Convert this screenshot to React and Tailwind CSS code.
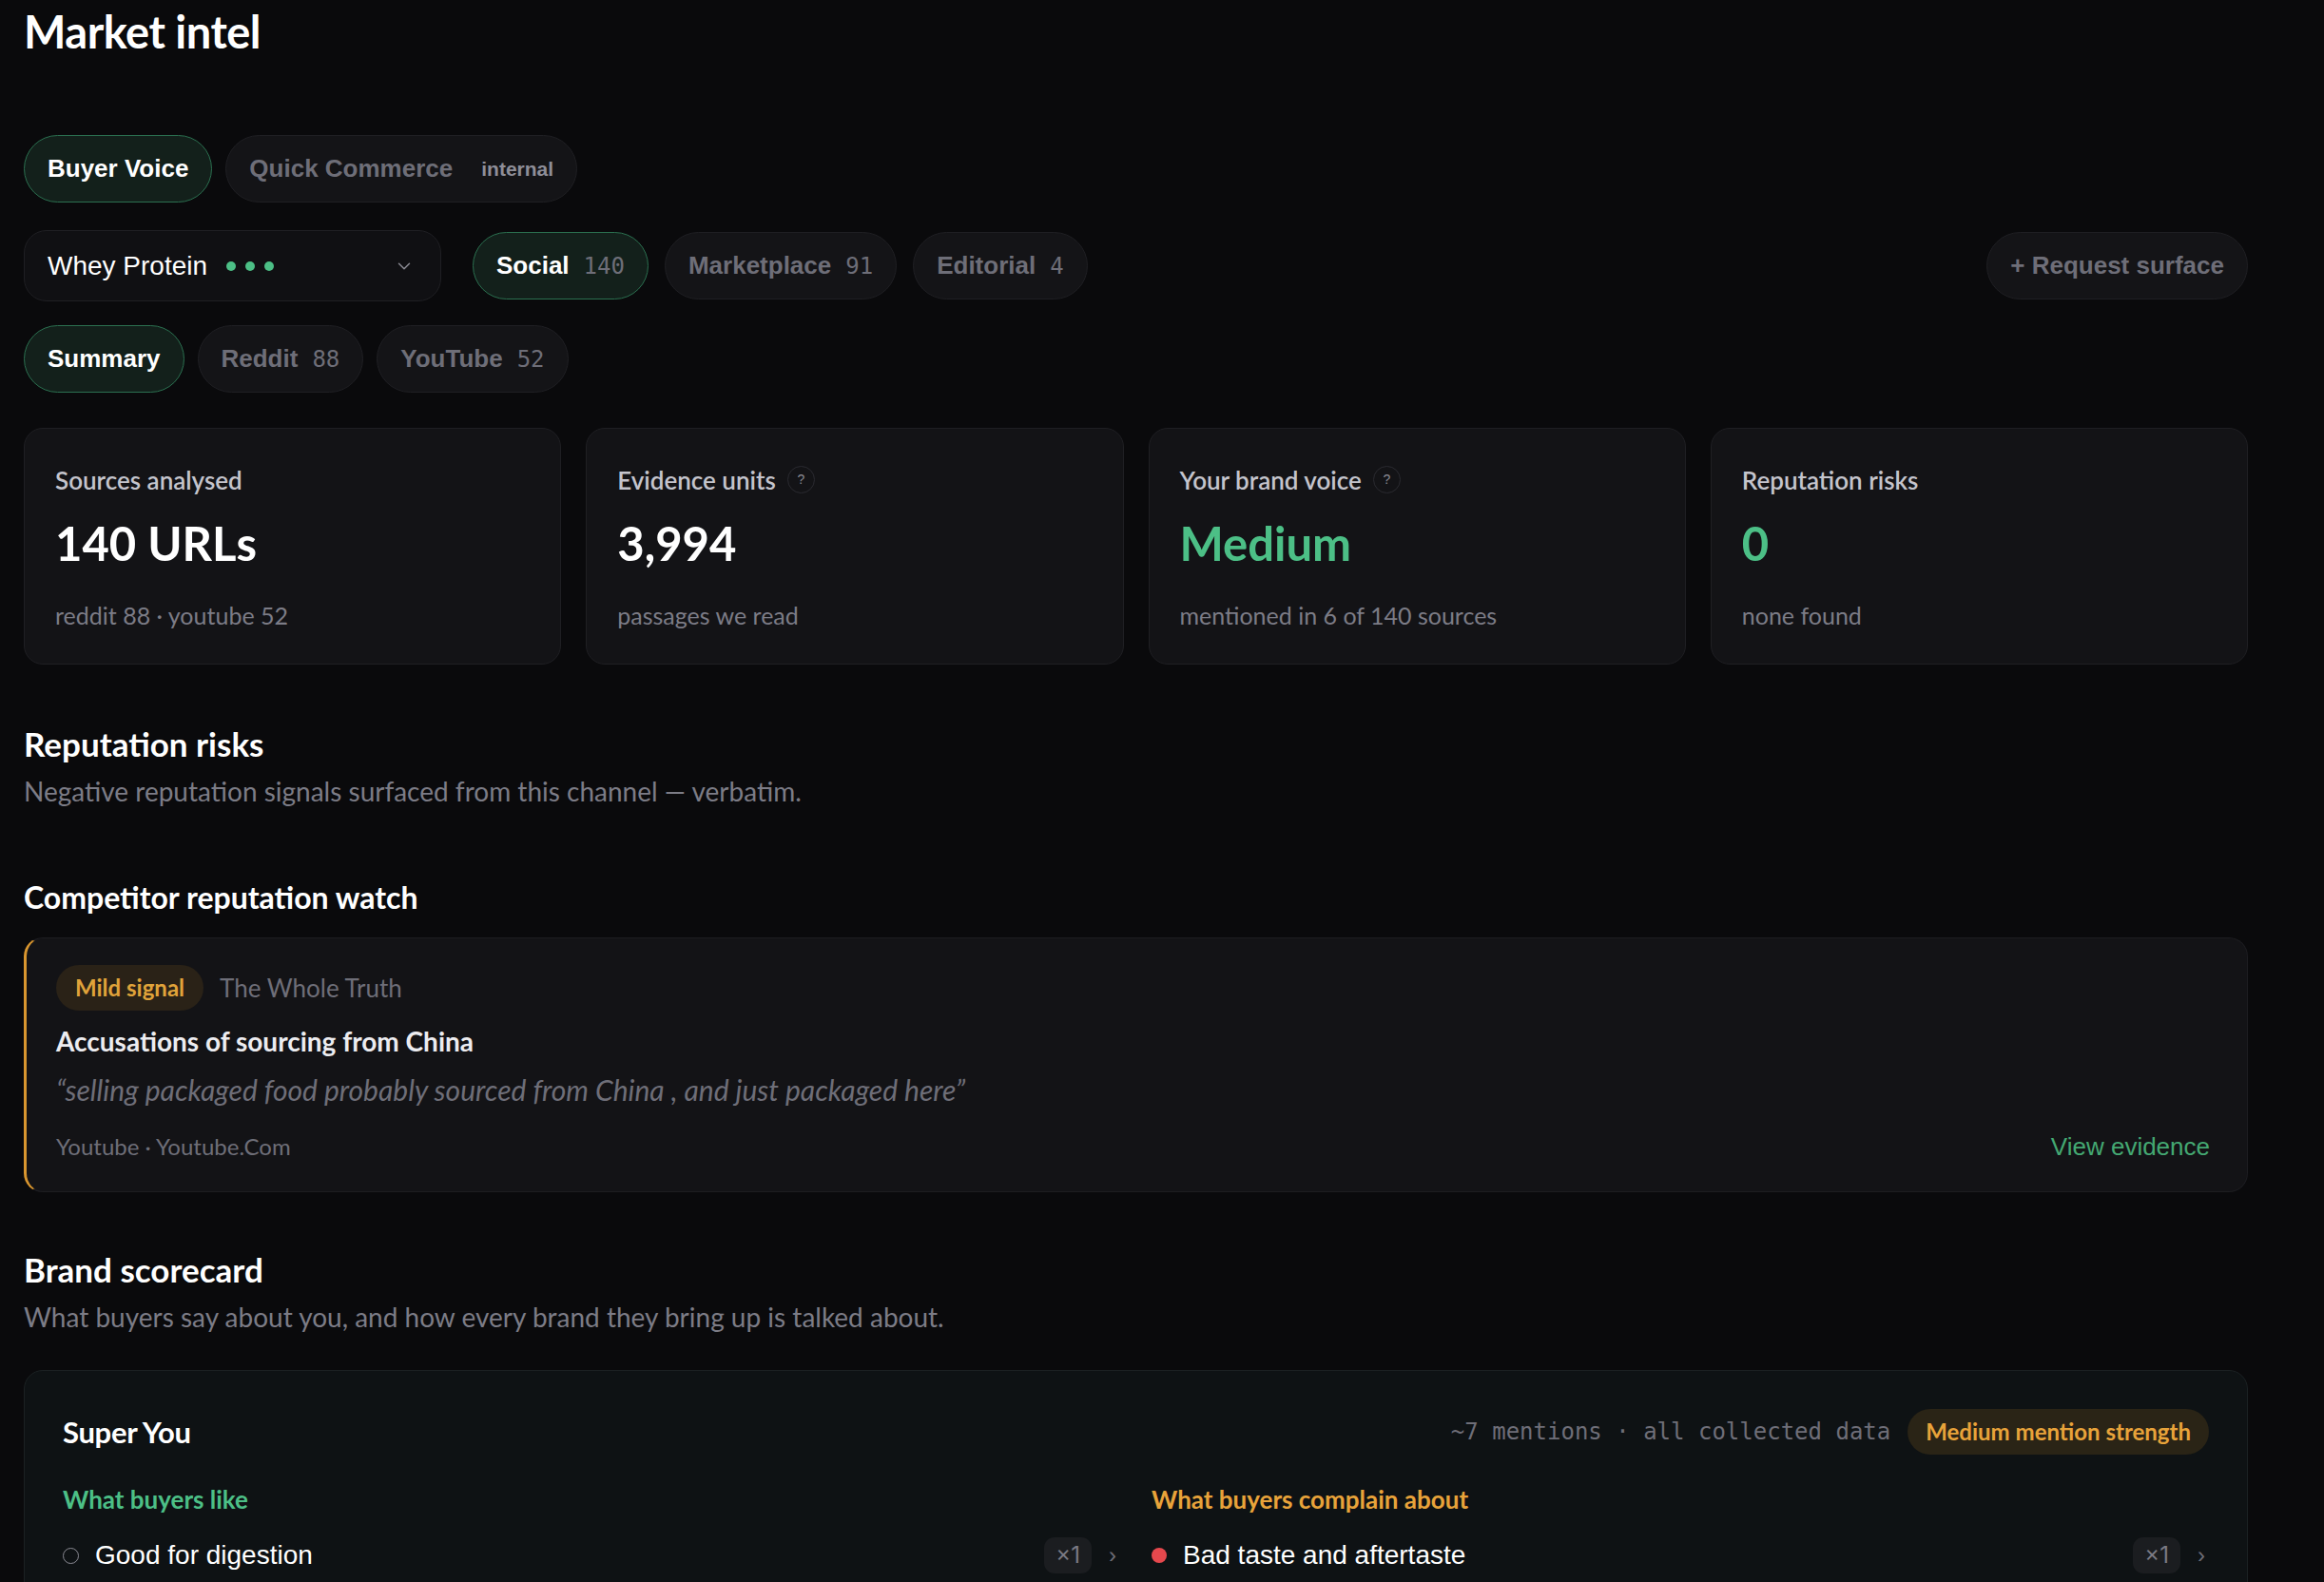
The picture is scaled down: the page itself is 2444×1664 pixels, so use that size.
import { ChevronDown } from 'lucide-react'

const geo = "font-['Lato',sans-serif]"
const arial = "font-['Liberation_Sans',Arial,sans-serif]"
const mono = "font-['DejaVu_Sans_Mono',monospace]"

function Pill({ active, children, className = '' }) {
  return (
    <div
      className={`h-[71px] px-[24px] rounded-full border flex items-center gap-[15px] ${arial} font-bold text-[26px] ${
        active
          ? 'bg-[#13201b] border-[#2b7050] text-white'
          : 'bg-[#141417] border-[#1f1f23] text-[#6e6e78]'
      } ${className}`}
    >
      {children}
    </div>
  )
}

function Count({ children }) {
  return <span className={`${mono} font-normal text-[24px] text-[#6e6e78]`}>{children}</span>
}

function Help() {
  return (
    <span className={`w-[29px] h-[29px] rounded-full border border-[#2a2a30] flex items-center justify-center text-[14px] text-[#8a8a93] ${arial}`}>
      ?
    </span>
  )
}

function StatCard({ label, help, value, valueClass, sub }) {
  return (
    <div className="h-[249px] rounded-[20px] border border-[#1f1f23] bg-[#131316] px-[32px] pt-[39px]">
      <div className="h-[29px] flex items-center gap-[12px]">
        <span className={`${geo} text-[26px] font-semibold leading-none text-[#c4c4cc]`}>{label}</span>
        {help && <Help />}
      </div>
      <div className={`${geo} mt-[28px] text-[49px] font-bold leading-none ${valueClass}`}>{value}</div>
      <div className={`${geo} mt-[39px] text-[25px] leading-none text-[#7c7c86]`}>{sub}</div>
    </div>
  )
}

function Item({ dot, text }) {
  return (
    <div className="h-[38px] flex items-center">
      {dot === 'open' ? (
        <span className="w-[17px] h-[17px] rounded-full border-[1.5px] border-[#8a8a93]" />
      ) : (
        <span className="w-[16px] h-[16px] rounded-full bg-[#e5484d]" />
      )}
      <span className={`ml-[17px] ${arial} text-[28px] text-white`}>{text}</span>
      <span className="ml-auto h-[38px] px-[12px] rounded-[11px] bg-[#1b1d20] flex items-center text-[24px] text-[#7a7a84] font-['Inter',sans-serif]">
        ×1
      </span>
      <span className={`ml-[18px] mr-[4px] ${arial} text-[24px] text-[#6e6e78]`}>›</span>
    </div>
  )
}

export default function App() {
  return (
    <div className={`min-h-screen bg-[#0a0a0c] pl-[25px] pr-[80px] pt-[10px] pb-[60px] ${geo}`}>
      <h1 className="text-[47px] font-bold leading-none text-white tracking-[-0.5px]">Market intel</h1>

      {/* channel tabs */}
      <div className="mt-[85px] flex gap-[14px]">
        <Pill active>Buyer Voice</Pill>
        <Pill className="gap-[30px]">
          Quick Commerce
          <span className="text-[21px] text-[#8e8e98]">internal</span>
        </Pill>
      </div>

      {/* product + surfaces */}
      <div className="mt-[29px] flex items-center">
        <div className="w-[439px] h-[75px] rounded-[24px] border border-[#1f1f23] bg-[#101013] pl-[24px] pr-[27px] flex items-center">
          <span className={`${arial} text-[28px] text-white`}>Whey Protein</span>
          <span className="ml-[20px] flex gap-[10px]">
            <span className="w-[10px] h-[10px] rounded-full bg-[#4cbf86]" />
            <span className="w-[10px] h-[10px] rounded-full bg-[#4cbf86]" />
            <span className="w-[10px] h-[10px] rounded-full bg-[#4cbf86]" />
          </span>
          <ChevronDown className="ml-auto text-[#8a8a93]" size={22} strokeWidth={1.6} />
        </div>
        <div className="ml-[33px] flex gap-[17px]">
          <Pill active>
            Social <Count>140</Count>
          </Pill>
          <Pill>
            Marketplace <Count>91</Count>
          </Pill>
          <Pill>
            Editorial <Count>4</Count>
          </Pill>
        </div>
        <Pill className="ml-auto">+ Request surface</Pill>
      </div>

      {/* source tabs */}
      <div className="mt-[25px] flex gap-[14px]">
        <Pill active>Summary</Pill>
        <Pill>
          Reddit <Count>88</Count>
        </Pill>
        <Pill>
          YouTube <Count>52</Count>
        </Pill>
      </div>

      {/* stats */}
      <div className="mt-[37px] grid grid-cols-4 gap-[26px]">
        <StatCard label="Sources analysed" value="140 URLs" valueClass="text-white" sub="reddit 88 · youtube 52" />
        <StatCard label="Evidence units" help value="3,994" valueClass="text-white" sub="passages we read" />
        <StatCard label="Your brand voice" help value="Medium" valueClass="text-[#4cbf86]" sub="mentioned in 6 of 140 sources" />
        <StatCard label="Reputation risks" value="0" valueClass="text-[#4cbf86]" sub="none found" />
      </div>

      {/* reputation risks */}
      <h2 className="mt-[66px] text-[35px] font-bold leading-none text-white">Reputation risks</h2>
      <p className="mt-[18px] text-[28px] leading-none text-[#7c7c86]">
        Negative reputation signals surfaced from this channel — verbatim.
      </p>

      <h3 className="mt-[82px] text-[32px] font-bold leading-none text-white">Competitor reputation watch</h3>
      <div className="mt-[26px] rounded-[20px] border border-[#1d1d21] border-l-[3px] border-l-[#d9962f] bg-[#131316] pl-[31px] pr-[39px] pt-[28px] pb-[34px]">
        <div className="flex items-center gap-[17px]">
          <span className="h-[48px] px-[20px] rounded-full bg-[#2a2217] flex items-center text-[24px] font-bold text-[#e0a33a]">
            Mild signal
          </span>
          <span className="text-[26px] text-[#6e6e78]">The Whole Truth</span>
        </div>
        <div className="mt-[18px] text-[28px] font-bold leading-none text-[#ececf0]">Accusations of sourcing from China</div>
        <div className="mt-[22px] text-[30px] italic leading-none text-[#6e6e78]">
          “selling packaged food probably sourced from China , and just packaged here”
        </div>
        <div className="mt-[32px] flex items-center">
          <span className="text-[24px] leading-none text-[#6e6e78]">Youtube · Youtube.Com</span>
          <span className={`ml-auto ${arial} text-[26px] leading-none text-[#44a872]`}>View evidence</span>
        </div>
      </div>

      {/* brand scorecard */}
      <h2 className="mt-[64px] text-[35px] font-bold leading-none text-white">Brand scorecard</h2>
      <p className="mt-[18px] text-[28px] leading-none text-[#7c7c86]">
        What buyers say about you, and how every brand they bring up is talked about.
      </p>

      <div className="mt-[42px] rounded-[20px] border border-[#1b2123] bg-[#0e1214] px-[40px] pt-[40px] pb-[40px]">
        <div className="flex items-center">
          <span className="text-[31px] font-bold text-white tracking-[-0.3px]">Super You</span>
          <span className={`ml-auto ${mono} text-[24px] text-[#6e6e78]`}>~7 mentions · all collected data</span>
          <span className="ml-[18px] h-[48px] px-[19px] rounded-full bg-[#2a2416] flex items-center text-[24px] font-bold text-[#e8a33a]">
            Medium mention strength
          </span>
        </div>
        <div className="mt-[34px] grid grid-cols-2 gap-x-[33px]">
          <div>
            <div className="text-[26px] font-bold leading-none text-[#4cbf86]">What buyers like</div>
            <div className="mt-[27px] flex flex-col gap-[16px]">
              <Item dot="open" text="Good for digestion" />
            </div>
          </div>
          <div>
            <div className="text-[26px] font-bold leading-none text-[#e8a33a]">What buyers complain about</div>
            <div className="mt-[27px] flex flex-col gap-[16px]">
              <Item dot="red" text="Bad taste and aftertaste" />
            </div>
          </div>
        </div>
      </div>
    </div>
  )
}
